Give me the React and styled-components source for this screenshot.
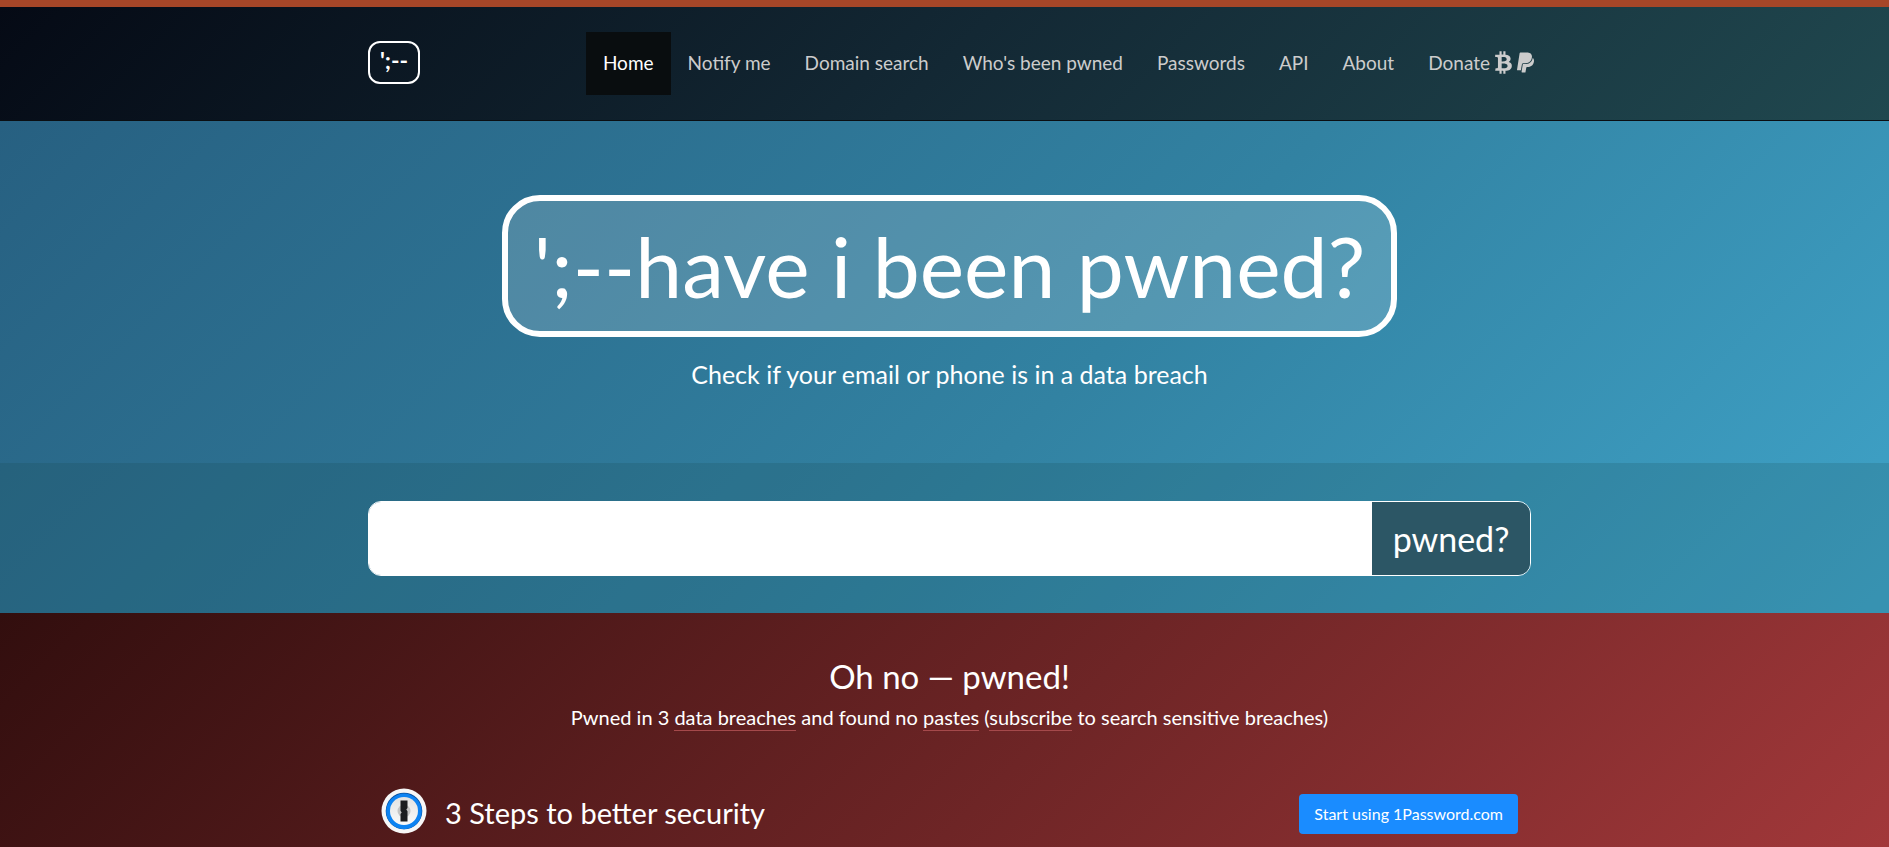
import styled, { createGlobalStyle } from "styled-components";
import { FaBtc, FaPaypal } from "react-icons/fa";

const links = ["Notify me", "Domain search", "Who's been pwned", "Passwords", "API", "About"];

export default function App() {
  return (
    <>
      <GlobalStyle />
      <Header>
        <Container>
          <Brand href="#home">';--</Brand>
          <Nav>
            <NavLink href="#home" $active>Home</NavLink>
            {links.map((link) => (
              <NavLink key={link} href="#">{link}</NavLink>
            ))}
            <NavLink href="#donate">
              Donate <FaBtc /> <FaPaypal />
            </NavLink>
          </Nav>
        </Container>
      </Header>
      <main>
        <Top>
          <Hero>
            <Title>';--have i been pwned?</Title>
            <Lead>Check if your email or phone is in a data breach</Lead>
          </Hero>
          <SearchBand>
            <SearchForm onSubmit={(e) => e.preventDefault()}>
              <SearchInput type="text" aria-label="email or phone" />
              <SearchButton>pwned?</SearchButton>
            </SearchForm>
          </SearchBand>
        </Top>
        <Result>
          <ResultTitle>Oh no — pwned!</ResultTitle>
          <Summary>
            Pwned in 3 <TextLink href="#breaches">data breaches</TextLink> and found no{" "}
            <TextLink href="#pastes">pastes</TextLink> (
            <TextLink href="#subscribe">subscribe</TextLink> to search sensitive breaches)
          </Summary>
          <Steps>
            <OnePassword />
            <StepsTitle>3 Steps to better security</StepsTitle>
            <StartButton href="#start">Start using 1Password.com</StartButton>
          </Steps>
        </Result>
      </main>
    </>
  );
}

function OnePassword() {
  return (
    <svg width="46" height="46" viewBox="0 0 46 46" aria-hidden="true">
      <defs>
        <linearGradient id="face" x1="0" y1="0" x2="0" y2="1">
          <stop offset="0" stopColor="#e2e2e2" />
          <stop offset="1" stopColor="#fafafa" />
        </linearGradient>
      </defs>
      <circle cx="23" cy="23" r="22.5" fill="#f7f7f7" />
      <circle cx="23" cy="23" r="18.3" fill="#0a4f9c" />
      <circle cx="23" cy="23.4" r="17.8" fill="#0d83f2" />
      <circle cx="23" cy="23" r="14" fill="url(#face)" />
      <circle cx="23" cy="23" r="6.5" fill="#c4c4c4" />
      <path d="M19.5 12.5h7v7.5l-1.2 1.6 1.2 1.6v10.3h-7V26l1.2-1.6-1.2-1.6z" fill="#1b1d20" />
    </svg>
  );
}

const GlobalStyle = createGlobalStyle`
  * {
    box-sizing: border-box;
  }
  body {
    margin: 0;
    background-color: #401414;
    color: white;
    font-family: Lato, "Open Sans", sans-serif;
    font-size: 20px;
    line-height: 24px;
  }
`;

const Header = styled.header`
  border-top: 7px solid #a64628;
  border-bottom: 1px solid #0a0e12;
  background: linear-gradient(135deg, #050a15 0%, #132834 50%, #20484f 100%);
  padding: 25px 16px 25px 26px;
`;
const Container = styled.div`
  display: flex;
  justify-content: space-between;
  align-items: center;
  max-width: 1163px;
  margin: 0 auto;
`;
const Brand = styled.a`
  display: flex;
  justify-content: center;
  width: 52px;
  height: 43px;
  margin-bottom: 2px;
  border: 2px solid white;
  border-radius: 12px;
  color: white;
  font-size: 23px;
  font-weight: 700;
  line-height: 34px;
  text-decoration: none;
`;
const Nav = styled.nav`
  display: flex;
  margin-right: -20px;
`;
const NavLink = styled.a`
  display: flex;
  align-items: center;
  gap: 5px;
  height: 63px;
  padding: 0 17px 2px;
  background-color: ${(props) => (props.$active ? "#090d0f" : "transparent")};
  color: ${(props) => (props.$active ? "white" : "#ccc")};
  font-size: 19px;
  text-decoration: none;
  white-space: nowrap;

  svg {
    width: 17px;
    height: 23px;
  }
`;
const Top = styled.div`
  background: linear-gradient(135deg, #276081 0%, #3282a2 56%, #3fa3c8 100%);
`;
const Hero = styled.section`
  display: flex;
  flex-direction: column;
  align-items: center;
  padding: 74px 16px 72px 26px;
`;
const Title = styled.h1`
  margin: 0;
  padding: 15px 26px;
  border: 6px solid white;
  border-radius: 38px;
  background-color: rgba(255, 255, 255, 0.17);
  font-size: 84px;
  font-weight: 400;
  line-height: 100px;
`;
const Lead = styled.p`
  margin: 20px 0 0;
  font-size: 25px;
  line-height: 34px;
`;
const SearchBand = styled.section`
  padding: 38px 16px 37px 26px;
  background-color: rgba(18, 60, 64, 0.16);
`;
const SearchForm = styled.form`
  display: flex;
  max-width: 1163px;
  height: 75px;
  margin: 0 auto;
  border: 1px solid white;
  border-radius: 13px;
  overflow: hidden;
`;
const SearchInput = styled.input`
  flex: 1;
  min-width: 0;
  border: none;
  padding: 0 16px;
  background-color: white;
  font: inherit;
  font-size: 34px;
`;
const SearchButton = styled.button`
  width: 158px;
  border: none;
  background-color: #2c5665;
  color: white;
  font: inherit;
  font-size: 34px;
`;
const Result = styled.section`
  padding: 42px 16px 14px 26px;
  background: linear-gradient(135deg, #320e0e 0%, #6e2526 55%, #a2383a 100%);
  text-align: center;
`;
const ResultTitle = styled.h2`
  margin: 0;
  font-size: 33px;
  font-weight: 400;
  line-height: 42px;
`;
const Summary = styled.p`
  margin: 8px 0 0;
`;
const TextLink = styled.a`
  padding-bottom: 1px;
  border-bottom: 1px solid #a5494b;
  color: white;
  text-decoration: none;
`;
const Steps = styled.div`
  display: flex;
  align-items: flex-end;
  gap: 18px;
  max-width: 1137px;
  margin: 59px auto 0;
`;
const StepsTitle = styled.h3`
  flex: 1;
  margin: 0;
  font-size: 29px;
  font-weight: 400;
  line-height: 42px;
  text-align: left;
`;
const StartButton = styled.a`
  padding: 8px 15px;
  border-radius: 4px;
  background-color: #1a8cff;
  color: white;
  font-size: 16px;
  text-decoration: none;
`;
